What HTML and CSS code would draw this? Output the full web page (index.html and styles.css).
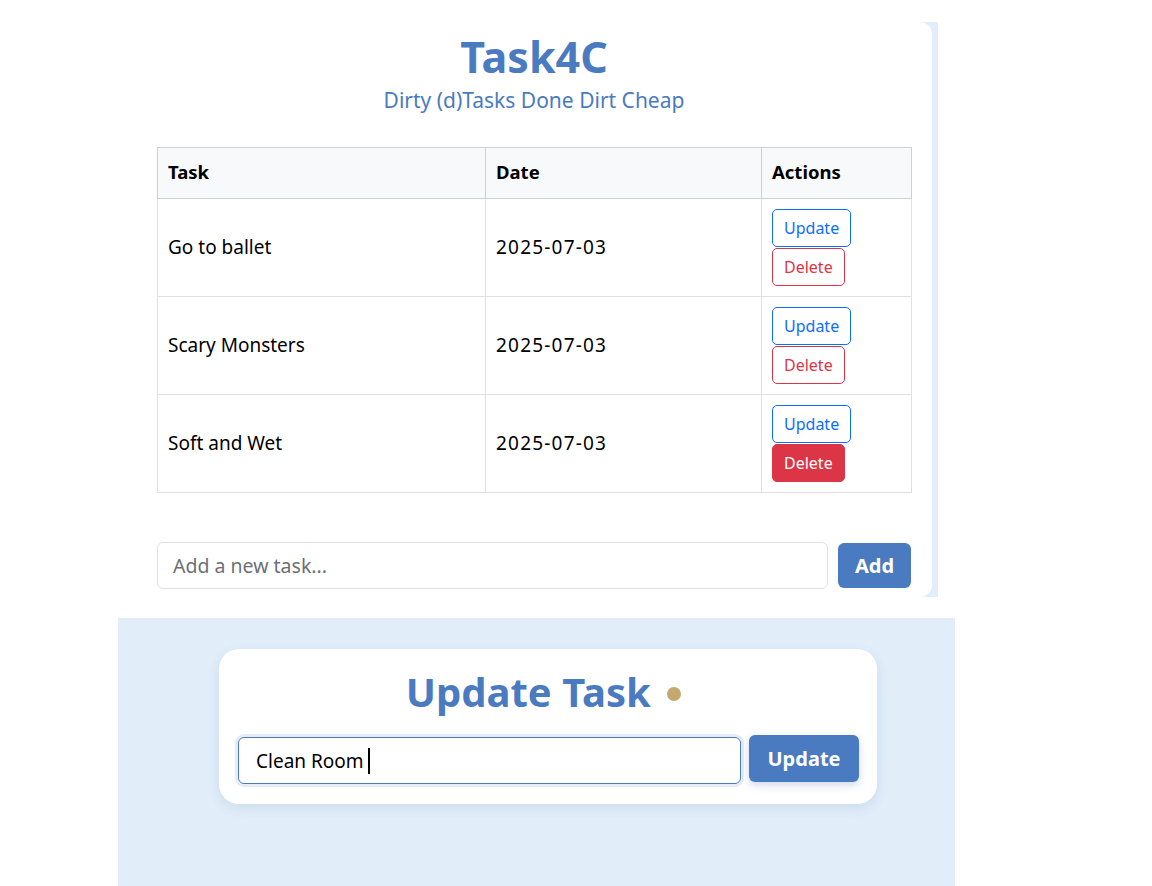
FILE: index.html
```html
<!DOCTYPE html>
<html>
<head>
<meta charset="utf-8">
<link rel="stylesheet" href="styles.css">
</head>
<body>
<div class="page">
  <div class="main-wrap">
    <div class="main-card">
      <h1 class="title">Task4C</h1>
      <p class="subtitle">Dirty (d)Tasks Done Dirt Cheap</p>
      <table class="tasks">
        <thead>
          <tr><th class="c-task">Task</th><th class="c-date">Date</th><th class="c-act">Actions</th></tr>
        </thead>
        <tbody>
          <tr><td>Go to ballet</td><td class="date">2025-07-03</td><td><div class="acts"><button class="btn btn-up">Update</button><button class="btn btn-del">Delete</button></div></td></tr>
          <tr><td>Scary Monsters</td><td class="date">2025-07-03</td><td><div class="acts"><button class="btn btn-up">Update</button><button class="btn btn-del">Delete</button></div></td></tr>
          <tr><td>Soft and Wet</td><td class="date">2025-07-03</td><td><div class="acts"><button class="btn btn-up">Update</button><button class="btn btn-del hover">Delete</button></div></td></tr>
        </tbody>
      </table>
      <div class="add-row">
        <input class="add-input" type="text" placeholder="Add a new task...">
        <button class="add-btn">Add</button>
      </div>
    </div>
  </div>
  <div class="update-area">
    <div class="update-card">
      <h2 class="update-title">Update Task <span class="dot"></span></h2>
      <div class="update-row">
        <div class="update-input"><span>Clean Room</span><span class="caret"></span></div>
        <button class="update-btn">Update</button>
      </div>
    </div>
  </div>
</div>
</body>
</html>
```

FILE: styles.css
```css
* { box-sizing: border-box; }
body {
  margin: 0;
  background: #fff;
  font-family: "Noto Sans", "Open Sans", sans-serif;
  color: #000;
}
.page {
  padding-top: 22px;
}
.main-wrap {
  margin-left: 136px;
  width: 802px;
  background: #e1edf9;
  padding-right: 6px;
}
.main-card {
  background: #fff;
  border-radius: 0 12px 12px 0;
  padding: 10px 21px 8px 21px;
  min-height: 574px;
}
.title {
  margin: 0;
  text-align: center;
  font-size: 43px;
  line-height: 50px;
  font-weight: 700;
  color: #4a7abf;
}
.subtitle {
  margin: 3px 0 0;
  text-align: center;
  font-size: 21px;
  line-height: 30px;
  color: #4a7abf;
}
.tasks {
  margin-top: 32px;
  width: 755px;
  border-collapse: collapse;
  font-size: 19px;
}
.tasks th, .tasks td {
  border: 1px solid #dee2e6;
  text-align: left;
  vertical-align: middle;
  padding: 10px 10px;
}
.tasks th {
  background: #f8f9fa;
  font-weight: 700;
  font-size: 18.5px;
  padding: 12px 10px 14px;
  border-color: #ced0d3;
  line-height: 24px;
}
.c-task { width: 328px; }
.c-date { width: 276px; }
.tasks td { line-height: 24px; height: 98px; padding-bottom: 12px; }
.tasks td.date { letter-spacing: 1.2px; }
.tasks td:last-child { padding-bottom: 10px; }
.acts {
  display: flex;
  flex-direction: column;
  align-items: flex-start;
  gap: 1px;
}
.btn {
  font-family: inherit;
  font-size: 16px;
  line-height: 24px;
  padding: 6px 11px;
  border-radius: 5px;
  background: #fff;
  cursor: pointer;
  letter-spacing: 0;
}
.btn-up { border: 1px solid #0d6efd; color: #0d6efd; }
.btn-del { border: 1px solid #dc3545; color: #dc3545; }
.btn-del.hover { background: #dc3545; color: #fff; }
.add-row {
  display: flex;
  gap: 10px;
  margin-top: 49px;
  align-items: center;
}
.add-input {
  flex: 1;
  height: 47px;
  border: 1px solid #dee2e6;
  border-radius: 6px;
  padding: 0 15px;
  font-family: inherit;
  font-size: 19.5px;
  color: #000;
}
.add-input::placeholder { color: #6c6f73; }
.add-btn {
  width: 73px;
  height: 45px;
  border: none;
  border-radius: 6px;
  background: #4a7abf;
  color: #fff;
  font-family: inherit;
  font-size: 20px;
  font-weight: 700;
}
.update-area {
  margin-top: 21px;
  margin-left: 118px;
  width: 837px;
  height: 268px;
  background: #e1edf9;
  padding: 31px 0 0 101px;
}
.update-card {
  width: 658px;
  background: #fff;
  border-radius: 20px;
  box-shadow: 0 4px 12px rgba(60, 100, 160, 0.12);
  padding: 16px 18px 20px 19px;
}
.update-title {
  margin: 0;
  text-align: center;
  font-size: 40px;
  line-height: 54px;
  font-weight: 700;
  color: #4a7abf;
  padding-right: 10px;
}
.dot {
  display: inline-block;
  width: 14px;
  height: 14px;
  border-radius: 50%;
  background: #c4a86e;
  margin-left: 6px;
  vertical-align: middle;
  position: relative;
  top: -2px;
}
.update-row {
  display: flex;
  gap: 8px;
  align-items: center;
  margin-top: 18px;
}
.update-input {
  flex: 1;
  height: 47px;
  border: 1px solid #4a7abf;
  border-radius: 6px;
  box-shadow: 0 0 0 3px #e4ecf8;
  display: flex;
  align-items: center;
  padding: 0 17px;
  font-size: 19px;
}
.caret {
  display: inline-block;
  width: 2px;
  height: 26px;
  background: #000;
  margin-left: 4px;
}
.update-btn {
  width: 110px;
  height: 47px;
  border: none;
  border-radius: 6px;
  background: #4a7abf;
  color: #fff;
  font-family: inherit;
  font-size: 20px;
  font-weight: 700;
  box-shadow: 0 3px 8px rgba(60, 100, 160, 0.25);
  margin-top: -4px;
}
```
